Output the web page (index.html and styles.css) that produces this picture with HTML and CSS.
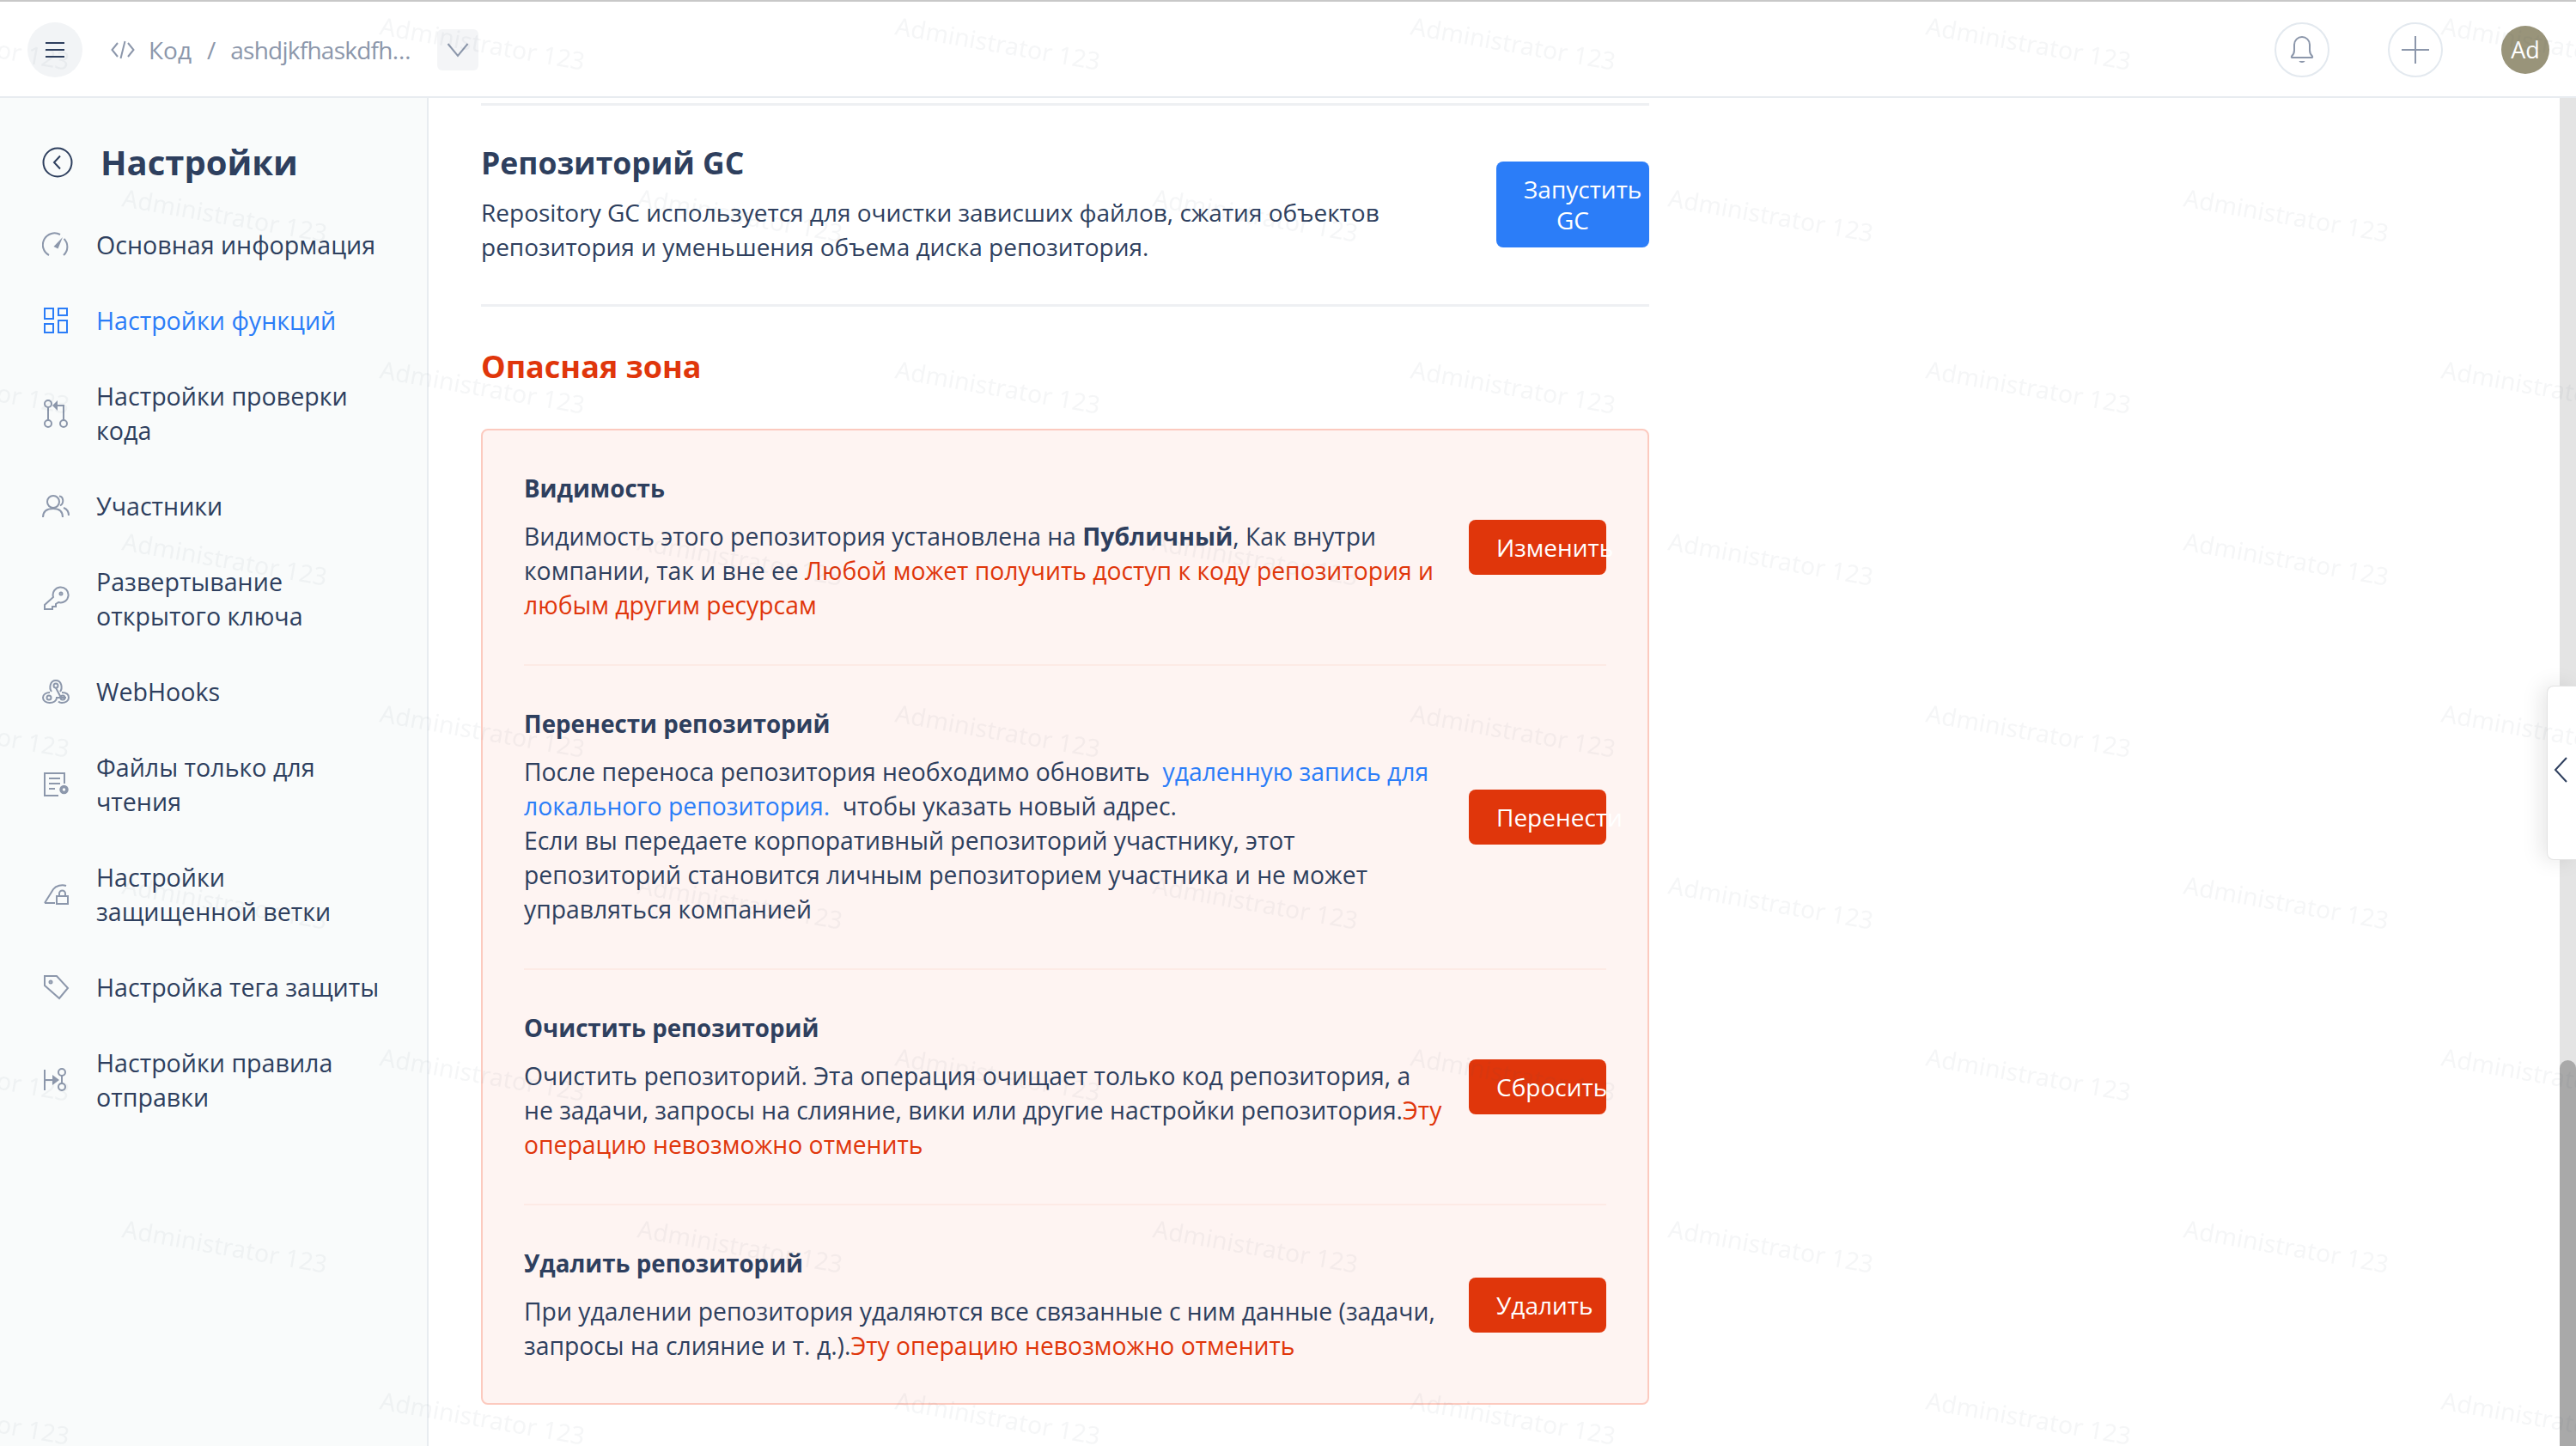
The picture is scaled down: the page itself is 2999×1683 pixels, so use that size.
FILE: index.html
```html
<!DOCTYPE html>
<html lang="ru">
<head>
<meta charset="utf-8">
<title>Настройки</title>
<link rel="stylesheet" href="styles.css">
</head>
<body>
<header class="topbar">
  <button class="menu-btn"><svg width="24" height="24" viewBox="0 0 24 24" class="ic-dark"><path d="M1 4h22M1 12h22M1 20h22"/></svg></button>
  <nav class="crumbs">
    <svg class="ic" width="28" height="28" viewBox="0 0 28 28"><path d="M8 6L1.500 14L8 22M20 6L26.500 14L20 22M16.500 4L11.500 24"/></svg>
    <span class="crumb-code">Код</span>
    <span class="crumb-sep">/</span>
    <span class="crumb-repo">ashdjkfhaskdfh…</span>
    <button class="drop-btn"><svg class="ic" width="26" height="18" viewBox="0 0 26 18"><path d="M1.500 2L13 16L24.500 2"/></svg></button>
  </nav>
  <div class="top-actions">
    <button class="round-btn"><svg class="ic" width="30" height="34" viewBox="0 0 30 34"><path d="M3 24.500c2-2 3-3 3-7V11a9 9 0 0 1 18 0v6.500c0 4 1 5 3 7 .6.8 0 1.500-1 1.500H4c-1 0-1.600-.7-1-1.500z"/><path class="ic-fill" d="M11.500 30h7c-.6 2.500-6.400 2.500-7 0z"/></svg></button>
    <button class="round-btn"><svg class="ic" width="32" height="32" viewBox="0 0 32 32"><path d="M16 0v32M0 16h32"/></svg></button>
    <div class="avatar">Ad</div>
  </div>
</header>
<div class="shell">
  <aside class="sidebar">
    <div class="side-title">
      <svg class="ic-dark" width="36" height="36" viewBox="0 0 36 36"><circle cx="18" cy="18" r="16.500"/><path d="M21 10.500L14 18L21 25.500"/></svg>
      <h1>Настройки</h1>
    </div>
    <ul class="side-list">
      <li class="side-item"><svg class="ic" width="30" height="30" viewBox="0 0 30 30"><path d="M7 27A13 13 0 0 1 20 3M24.500 8A13 13 0 0 1 24 27"/><path class="ic-fill" d="M23 6L17.500 19.500L12.500 17z"/></svg><span>Основная информация</span></li>
      <li class="side-item active"><svg class="ic-blue" width="30" height="32" viewBox="0 0 30 32"><path d="M2 2h10v12H2zM18 2h10v8H18zM2 20h10v10H2zM18 16h10v14H18z"/></svg><span>Настройки функций</span></li>
      <li class="side-item"><svg class="ic" width="30" height="34" viewBox="0 0 30 34"><circle cx="6" cy="6" r="4"/><circle cx="6" cy="29" r="4"/><circle cx="24" cy="29" r="4"/><path d="M6 10v15M24 25V8h-8"/><path class="ic-fill" d="M17 2v12l-6-6z"/></svg><span>Настройки проверки<br>кода</span></li>
      <li class="side-item"><svg class="ic" width="32" height="28" viewBox="0 0 32 28"><circle cx="13" cy="9" r="7"/><path d="M1 27c0-7 5-10 12-10s11 3 11 10M20 2.500c5 .5 6 8 1 11M25 16c4 1.500 6 5 6 9"/></svg><span>Участники</span></li>
      <li class="side-item"><svg class="ic" width="30" height="30" viewBox="0 0 30 30"><path d="M12 13a9 9 0 1 1 6 6l-3 2v3h-4v3H2v-5z"/><circle cx="21" cy="9" r="1.500"/></svg><span>Развертывание<br>открытого ключа</span></li>
      <li class="side-item"><svg class="ic" width="32" height="30" viewBox="0 0 32 30"><path d="M11 15C8 11 9 2 16 2s8 9 5 13"/><circle cx="16" cy="8" r="2.500"/><path d="M16 10.500L22 22M9 16c-4 0-8 2-8 6s4 6 8 6 8-2 8-6h11"/><circle cx="8" cy="22" r="2.500"/><path d="M23 16c5 0 8 2 8 6s-4 6-8 6c-2 0-3-.5-4-1.500"/><circle cx="24" cy="22" r="2.500"/></svg><span>WebHooks</span></li>
      <li class="side-item"><svg class="ic" width="30" height="30" viewBox="0 0 30 30"><path d="M25 14V2H2v26h16M7 8h13M7 14h13M7 20h7"/><circle class="ic-gear" cx="24.500" cy="21" r="3.500"/></svg><span>Файлы только для<br>чтения</span></li>
      <li class="side-item"><svg class="ic" width="30" height="28" viewBox="0 0 30 28"><path d="M2 24L12 8c3-4 10-6 15-4M2 24h12"/><path d="M16 16h13v9H16zM19 16v-3a3.500 3.500 0 0 1 7 0v3"/></svg><span>Настройки<br>защищенной ветки</span></li>
      <li class="side-item"><svg class="ic" width="30" height="30" viewBox="0 0 30 30"><path d="M2 5V2h14l13 14-10 12L2 13z"/><circle cx="9" cy="9" r="1.500"/></svg><span>Настройка тега защиты</span></li>
      <li class="side-item"><svg class="ic" width="30" height="30" viewBox="0 0 30 30"><path d="M2 3v24M2 15h9M22 10v8"/><path class="ic-fill" d="M11 9l8 6-8 6z"/><circle cx="22" cy="6" r="4"/><circle cx="22" cy="23" r="4"/></svg><span>Настройки правила<br>отправки</span></li>
    </ul>
  </aside>
  <main class="content">
    <section class="gc">
      <div class="gc-text">
        <h2>Репозиторий GC</h2>
        <p>Repository GC используется для очистки зависших файлов, сжатия объектов<br>репозитория и уменьшения объема диска репозитория.</p>
      </div>
      <button class="btn btn-blue">Запустить GC</button>
    </section>
    <h2 class="danger-title">Опасная зона</h2>
    <section class="danger-box">
      <div class="danger-row">
        <div class="danger-text">
          <h3>Видимость</h3>
          <p>Видимость этого репозитория установлена на <b>Публичный</b>, Как внутри<br>компании, так и вне ее <span class="red">Любой может получить доступ к коду репозитория и любым другим ресурсам</span></p>
        </div>
        <button class="btn btn-red">Изменить</button>
      </div>
      <div class="danger-row">
        <div class="danger-text">
          <h3>Перенести репозиторий</h3>
          <p>После переноса репозитория необходимо обновить &nbsp;<span class="link">удаленную запись для локального репозитория.</span> &nbsp;чтобы указать новый адрес.<br>Если вы передаете корпоративный репозиторий участнику, этот<br>репозиторий становится личным репозиторием участника и не может<br>управляться компанией</p>
        </div>
        <button class="btn btn-red">Перенести</button>
      </div>
      <div class="danger-row">
        <div class="danger-text">
          <h3>Очистить репозиторий</h3>
          <p>Очистить репозиторий. Эта операция очищает только код репозитория, а<br>не задачи, запросы на слияние, вики или другие настройки репозитория.<span class="red">Эту операцию невозможно отменить</span></p>
        </div>
        <button class="btn btn-red">Сбросить</button>
      </div>
      <div class="danger-row">
        <div class="danger-text">
          <h3>Удалить репозиторий</h3>
          <p>При удалении репозитория удаляются все связанные с ним данные (задачи,<br>запросы на слияние и т. д.).<span class="red">Эту операцию невозможно отменить</span></p>
        </div>
        <button class="btn btn-red">Удалить</button>
      </div>
    </section>
  </main>
  <div class="scrollbar"><div class="thumb"></div></div>
</div>
<div class="side-handle"><svg class="ic-dark" width="16" height="30" viewBox="0 0 16 30"><path d="M15 1L2 15L15 29"/></svg></div>
<svg class="watermark" xmlns="http://www.w3.org/2000/svg">
  <defs>
    <pattern id="wm" x="0" y="0" width="600" height="400" patternUnits="userSpaceOnUse">
      <text x="141" y="240" transform="rotate(10 141 240)">Administrator 123</text>
      <text x="441" y="40" transform="rotate(10 441 40)">Administrator 123</text>
      <text x="-159" y="40" transform="rotate(10 -159 40)">Administrator 123</text>
    </pattern>
  </defs>
  <rect width="100%" height="100%" fill="url(#wm)"/>
</svg>
</body>
</html>
```
FILE: styles.css
```css
* { box-sizing: border-box; }
html, body { margin: 0; height: 100%; }
body {
  display: flex;
  flex-direction: column;
  height: 1683px;
  overflow: hidden;
  background: #fff;
  color: #2e3f5e;
  font-family: "Open Sans", "Noto Sans", sans-serif;
  font-size: 28px;
  line-height: 40px;
}
button { font-family: inherit; border: 0; padding: 0; }
h1, h2, h3, p, ul { margin: 0; padding: 0; }
ul { list-style: none; }
svg { flex: none; fill: none; }
.ic, .ic-dark, .ic-blue { stroke-width: 2; }
.ic { stroke: #8c97ab; }
.ic-dark { stroke: #2e3f5e; }
.ic-blue { stroke: #2b7df8; }
.ic-fill { fill: #8c97ab; stroke: none; }
.ic-gear { stroke-width: 3.500; }

.topbar {
  flex: none;
  display: flex;
  align-items: center;
  height: 114px;
  padding: 2px 31px 0 32px;
  border-top: 2px solid #c8c8c8;
  border-bottom: 2px solid #e8ecf0;
  background: #fff;
}
.menu-btn {
  display: flex;
  align-items: center;
  justify-content: center;
  width: 64px;
  height: 64px;
  border-radius: 50%;
  background: #f2f4f6;
}
.crumbs {
  display: flex;
  align-items: center;
  margin-left: 33px;
  color: #8c97ab;
}
.crumb-code { margin-left: 16px; }
.crumb-sep { margin-left: 18px; }
.crumb-repo { margin-left: 17px; letter-spacing: -.75px; }
.drop-btn {
  display: flex;
  align-items: center;
  justify-content: center;
  width: 48px;
  height: 48px;
  margin-left: 31px;
  border-radius: 6px;
  background: #f4f5f7;
}
.top-actions {
  display: flex;
  align-items: center;
  margin-left: auto;
}
.round-btn {
  display: flex;
  align-items: center;
  justify-content: center;
  width: 64px;
  height: 64px;
  margin-right: 68px;
  border: 2px solid #e3e9ef;
  border-radius: 50%;
  background: #fff;
}
.avatar {
  width: 56px;
  height: 56px;
  border-radius: 50%;
  background: #99947a;
  color: #fff;
  font-size: 27px;
  line-height: 56px;
  text-align: center;
}

.shell { flex: 1; display: flex; min-height: 0; }
.sidebar {
  flex: none;
  width: 499px;
  padding: 50px 0 0 49px;
  border-right: 2px solid #e8ecf0;
  background: #f9fbfb;
}
.side-title {
  display: flex;
  align-items: center;
  gap: 32px;
  height: 50px;
}
.side-title h1 {
  font-size: 40px;
  font-weight: 700;
  line-height: 50px;
}
.side-list { margin-top: 27px; font-size: 28.600px; }
.side-item {
  display: flex;
  align-items: center;
  gap: 31px;
  padding: 24px 0;
}
.side-item svg { width: 32px; }
.side-item.active { color: #2b7df8; }

.content {
  flex: 1;
  min-width: 0;
  padding: 6px 0 0 61px;
}
.gc {
  display: flex;
  align-items: center;
  justify-content: space-between;
  width: 1360px;
  padding: 46px 0 47px;
  border-top: 3px solid #eef0f3;
  border-bottom: 3px solid #eef0f3;
}
.gc h2, .danger-title {
  font-size: 36px;
  font-weight: 700;
  line-height: 40px;
}
.gc h2 { font-size: 35.500px; }
.gc p { margin-top: 18px; }
.danger-title { margin-top: 50px; color: #e0360b; }
.danger-box {
  width: 1360px;
  margin-top: 52px;
  padding: 0 48px;
  border: 2px solid #fccabf;
  border-radius: 8px;
  background: #fef4f2;
}
.danger-row {
  display: flex;
  align-items: center;
  gap: 24px;
  padding: 49px 0;
  border-top: 2px solid #fdeae5;
}
.danger-row:first-child { border-top: 0; padding-top: 49px; }
.danger-row:last-child { padding-bottom: 47px; }
.danger-text { flex: 1; min-width: 0; }
.danger-text h3 {
  font-size: 27.700px;
  font-weight: 700;
  line-height: 36px;
}
.danger-text p { margin-top: 18px; font-size: 28.300px; }
.danger-text b { font-weight: 700; }
.red { color: #e0360b; }
.link { color: #2b7df8; }
.btn {
  flex: none;
  font-size: 28px;
  color: #fff;
  line-height: 36px;
  border-radius: 8px;
}
.btn-blue {
  width: 178px;
  padding: 14px 32px;
  background: #2b7df8;
  text-align: center;
}
.btn-red {
  width: 160px;
  height: 64px;
  padding-left: 32px;
  background: #e0360b;
  text-align: left;
  white-space: nowrap;
}

.scrollbar {
  flex: none;
  display: flex;
  flex-direction: column;
  justify-content: flex-end;
  width: 19px;
  background: #e4e4e4;
}
.thumb {
  height: 449px;
  border-radius: 10px 10px 0 0;
  background: #a9a9a9;
}
.side-handle {
  position: absolute;
  top: 798px;
  right: 0;
  display: flex;
  align-items: center;
  justify-content: flex-start;
  width: 34px;
  height: 203px;
  padding: 0 0 8px 7px;
  border: 1px solid #e3e3e3;
  border-right: 0;
  border-radius: 8px 0 0 8px;
  background: #fff;
  box-shadow: -6px 0 24px rgba(0, 0, 0, .1);
}
.watermark {
  position: fixed;
  inset: 0;
  width: 100%;
  height: 100%;
  pointer-events: none;
}
.watermark text {
  fill: rgba(60, 70, 90, .05);
  font-family: "Noto Sans", sans-serif;
  font-size: 28.500px;
}
```
